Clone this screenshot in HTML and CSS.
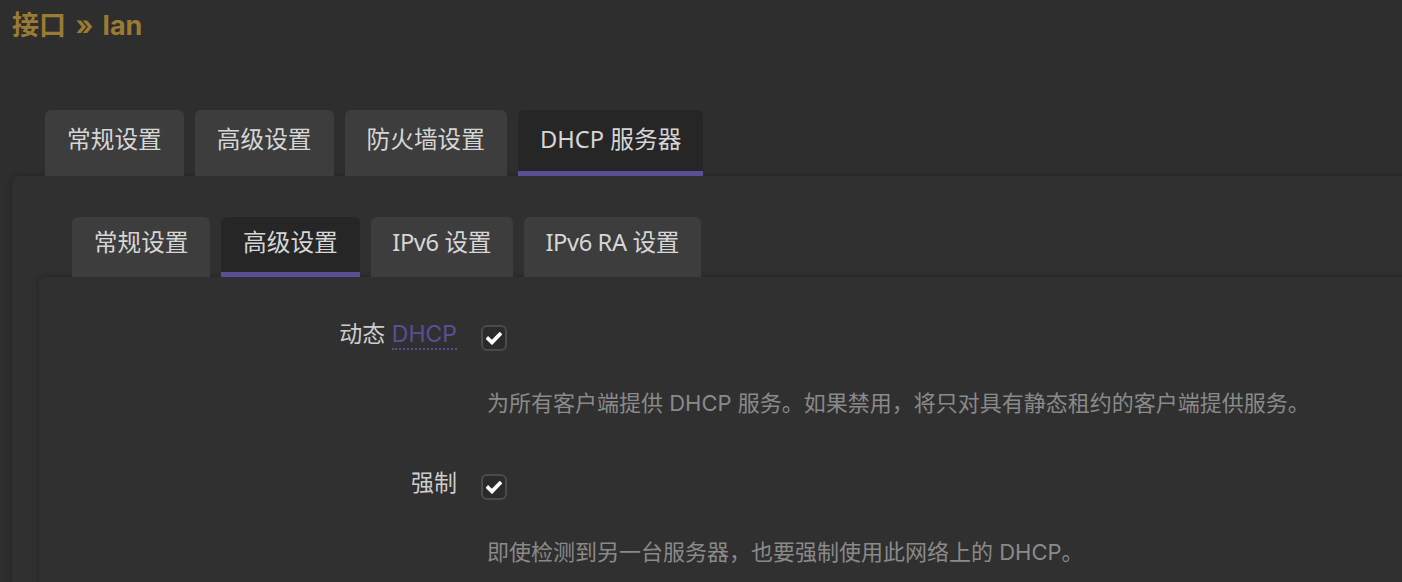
FILE: index.html
```html
<!DOCTYPE html>
<html lang="zh-CN">
<head>
<meta charset="utf-8">
<title>接口 » lan</title>
<link rel="stylesheet" href="styles.css">
</head>
<body>
<h2 class="page-title">接口 » lan</h2>
<ul class="tabs tabs-main">
  <li class="tab">常规设置</li>
  <li class="tab">高级设置</li>
  <li class="tab">防火墙设置</li>
  <li class="tab tab-active">DHCP 服务器</li>
</ul>
<div class="panel panel-outer">
  <ul class="tabs tabs-sub">
    <li class="tab">常规设置</li>
    <li class="tab tab-active">高级设置</li>
    <li class="tab tab-tight">IPv6 设置</li>
    <li class="tab tab-tight">IPv6 RA 设置</li>
  </ul>
  <div class="panel panel-inner">
    <div class="row">
      <div class="row-label">动态 <abbr class="abbr">DHCP</abbr></div>
      <div class="row-field">
        <span class="checkbox"><svg width="16" height="13" viewBox="0 0 16 13"><polyline points="2.2,6.8 6,10.4 13.8,2.4" fill="none" stroke="#fff" stroke-width="3.8" stroke-linecap="square" stroke-linejoin="miter"/></svg></span>
        <div class="row-desc">为所有客户端提供 DHCP 服务。如果禁用，将只对具有静态租约的客户端提供服务。</div>
      </div>
    </div>
    <div class="row">
      <div class="row-label">强制</div>
      <div class="row-field">
        <span class="checkbox"><svg width="16" height="13" viewBox="0 0 16 13"><polyline points="2.2,6.8 6,10.4 13.8,2.4" fill="none" stroke="#fff" stroke-width="3.8" stroke-linecap="square" stroke-linejoin="miter"/></svg></span>
        <div class="row-desc">即使检测到另一台服务器，也要强制使用此网络上的 DHCP。</div>
      </div>
    </div>
  </div>
</div>
</body>
</html>
```
FILE: styles.css
```css
html, body {
  margin: 0;
  padding: 0;
  overflow: hidden;
  background: #2e2e2e;
}
body {
  font-family: "Inter", "Noto Sans CJK SC", sans-serif;
  color: #d2d2d2;
  height: 582px;
}
.page-title {
  margin: 0;
  padding: 10px 12px 0;
  font-size: 27px;
  line-height: 31px;
  font-weight: 700;
  word-spacing: 3px;
  color: #9a7b34;
}
.tabs {
  list-style: none;
  margin: 0;
  padding: 0;
  display: flex;
  gap: 11px;
}
.tab {
  font-family: "Noto Sans", "Noto Sans CJK SC", sans-serif;
  background: #3d3d3d;
  color: #d6d6d6;
  border-radius: 6px 6px 0 0;
  white-space: nowrap;
}
.tab-tight {
  letter-spacing: -0.4px;
}
.tabs-main {
  margin: 69px 0 0 45px;
}
.tabs-main .tab {
  font-size: 23.7px;
  line-height: 58px;
  padding: 0 22px 8px;
}
.tabs-main .tab-active {
  padding-bottom: 3px;
}
.tabs-sub {
  margin: 0 0 0 33px;
}
.tabs-sub .tab {
  font-size: 23.7px;
  line-height: 50px;
  padding: 0 21.75px 10px;
}
.tabs-sub .tab-active {
  padding-bottom: 5px;
}
.tab-active {
  background: #262626;
  border-bottom: 5px solid #5a4e96;
}
.panel {
  background: #303030;
  border-radius: 6px 0 0 0;
  box-shadow: 0 0 6px rgba(0, 0, 0, 0.28);
}
.panel-outer {
  margin: 0 -40px 0 12px;
  padding: 41px 0 0 27px;
  height: 500px;
}
.panel-inner {
  padding-top: 48px;
  height: 400px;
}
.row {
  display: flex;
  margin-bottom: 56px;
}
.row-label {
  width: 418px;
  box-sizing: border-box;
  text-align: right;
  font-size: 23px;
  line-height: 18px;
  color: #cdcdcd;
}
.abbr {
  color: #5a4e96;
  text-decoration: none;
  border-bottom: 2px dotted #5a4e96;
}
.row-field {
  margin-left: 24px;
}
.checkbox {
  display: flex;
  align-items: center;
  justify-content: center;
  width: 26px;
  height: 26px;
  box-sizing: border-box;
  border: 2px solid #4b4b4b;
  border-radius: 6px;
  background: #2b2b2b;
}
.row-desc {
  margin-top: 37px;
  padding-left: 6px;
  font-size: 22px;
  line-height: 30px;
  color: #8a8a8a;
  white-space: nowrap;
}
```
